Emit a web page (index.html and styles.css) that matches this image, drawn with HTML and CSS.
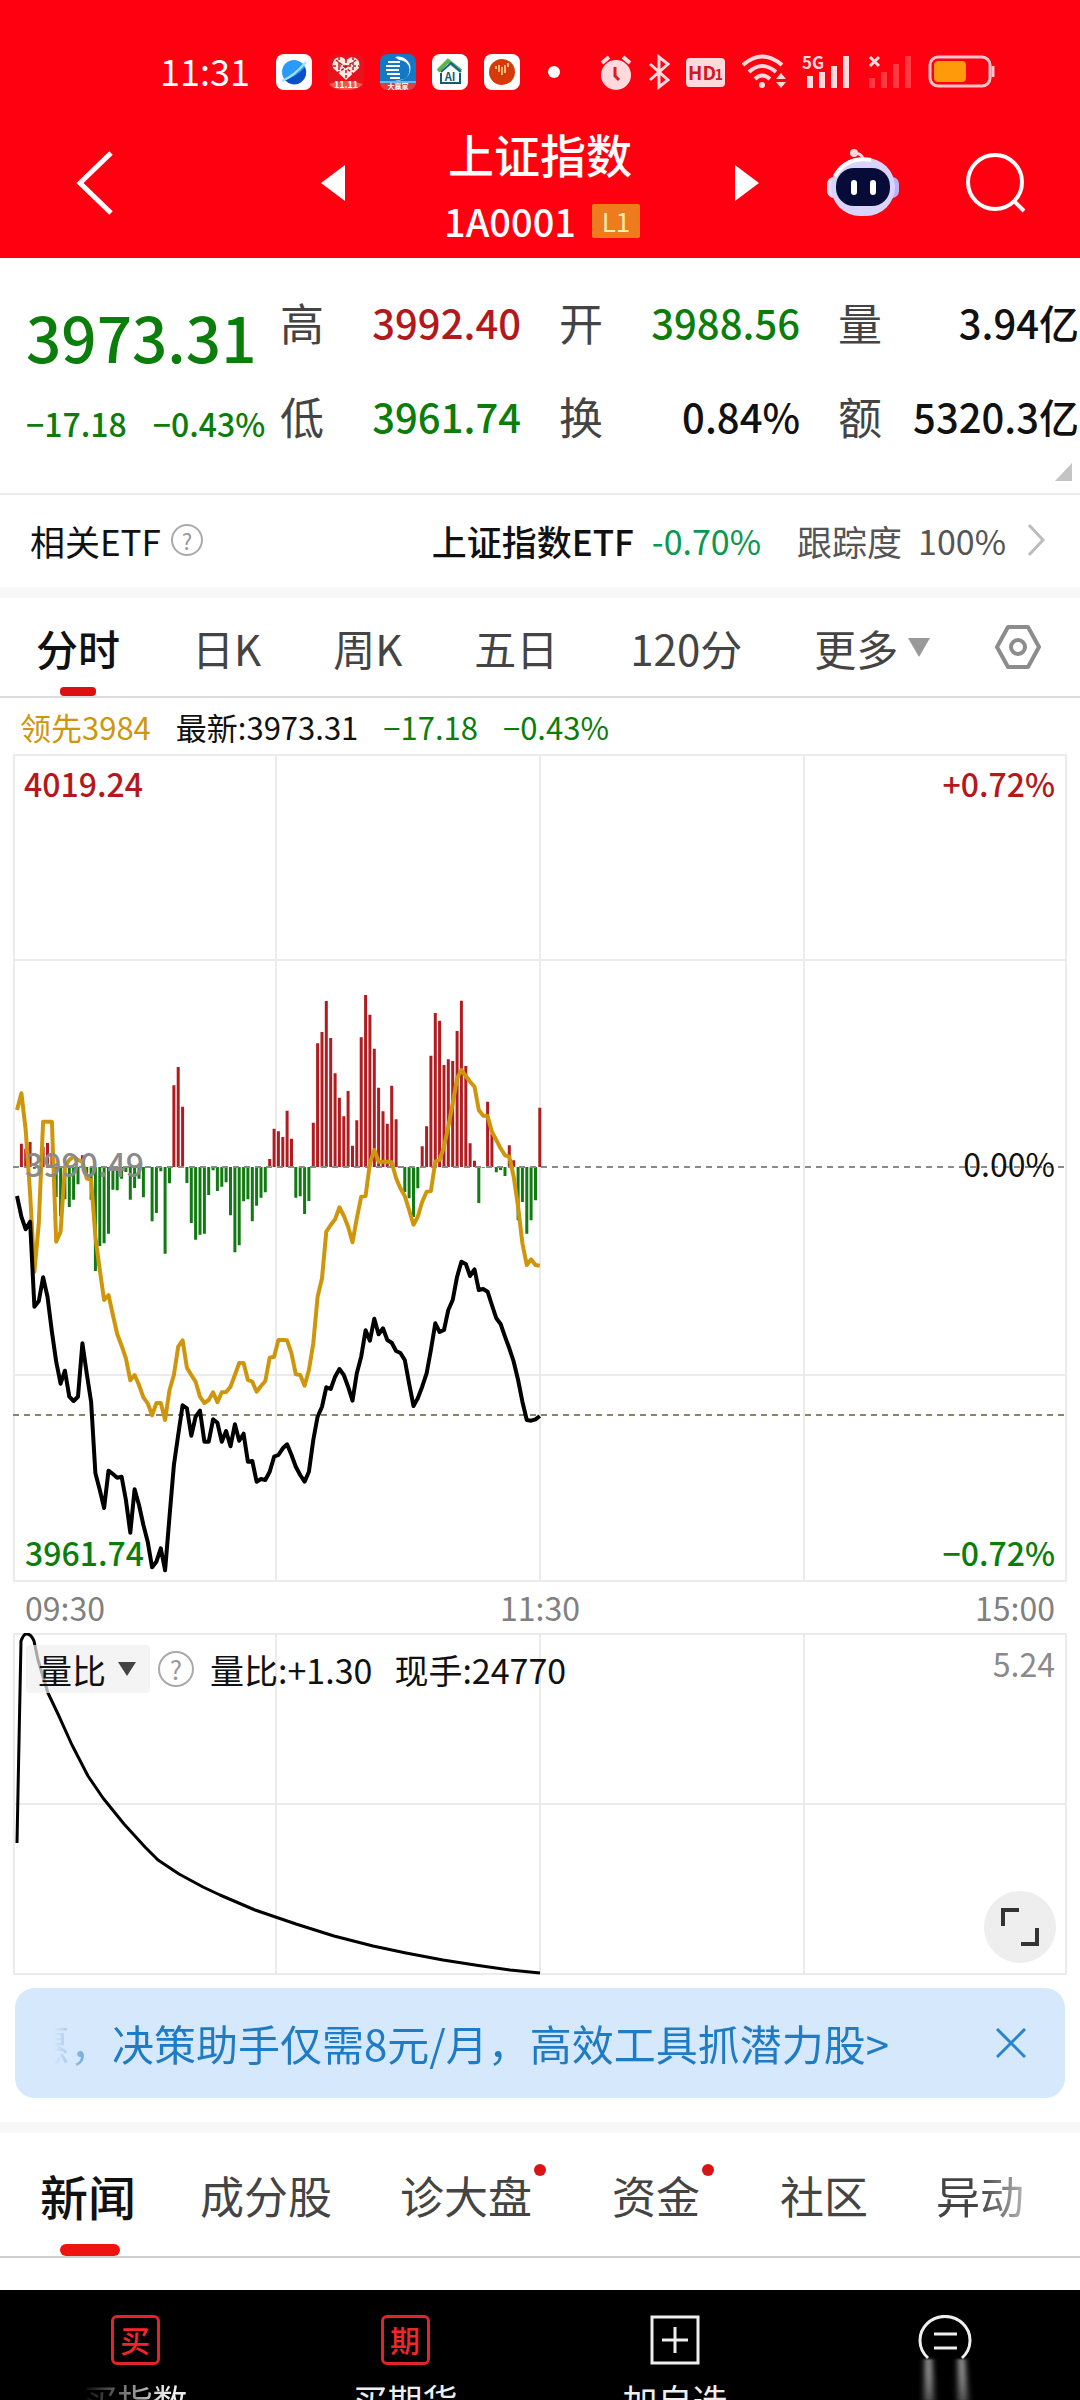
FILE: index.html
```html
<!DOCTYPE html>
<html lang="zh-CN">
<head>
<meta charset="utf-8">
<meta name="viewport" content="width=device-width, initial-scale=1">
<title>上证指数</title>
<link rel="stylesheet" href="styles.css">
</head>
<body>
<header class="top">
  <div class="status">
    <span class="clock">11:31</span>
    <div class="apps">
      <svg width="36" height="36" viewBox="0 0 36 36"><rect width="36" height="36" rx="8" fill="#fff"/><circle cx="18" cy="18" r="12" fill="#2b9bf8"/><path d="M9 26Q22 22 29 13A12 12 0 0 1 9 26Z" fill="#0b50c8"/><path d="M6 27Q18 22 30 8" stroke="#a8e0ff" stroke-width="2" fill="none"/></svg>
      <svg width="36" height="36" viewBox="0 0 36 36"><rect width="36" height="36" rx="8" fill="#e8121c"/><path d="M18 26L5 14Q3 4 12 3Q16 3 18 7Q21 3 25 3Q33 5 31 14Z" fill="#fbe9e4"/><path d="M8 6l20 16M28 6L8 20M18 6v20M5 12h26M11 3v14M25 3v14" stroke="#c81c22" stroke-width="1.5" stroke-dasharray="3 2"/><path d="M1 30Q18 24 35 30Q30 36 18 36T1 30Z" fill="#f4574a"/><text x="18" y="34" text-anchor="middle" class="app-label">11.11</text></svg>
      <svg width="36" height="36" viewBox="0 0 36 36"><rect width="36" height="36" rx="8" fill="#1478c4"/><path d="M15 3a12 12 0 1 1 0 23h5a9 9 0 0 0-1-20Z" fill="#fff"/><path d="M8 8h12M6 12h14M6 16h13M7 20h13M10 24h10" stroke="#fff" stroke-width="2"/><path d="M0 28h36v2q-2 6-8 6H8q-6 0-8-6Z" fill="#d8413d"/><path d="M0 28h36" stroke="#6db4e8" stroke-width="2"/><text x="18" y="35" text-anchor="middle" class="app-label app-label-s">大赢家</text></svg>
      <svg width="36" height="36" viewBox="0 0 36 36"><rect width="36" height="36" rx="8" fill="#fff"/><path d="M6 17L16 7l13 10" stroke="#55b848" stroke-width="4" fill="none"/><path d="M9 18L19 9l10 9" stroke="#1d5c9c" stroke-width="2" fill="none"/><path d="M9 19v10h19V19" stroke="#175a6e" stroke-width="2" fill="none"/><text x="18" y="27" text-anchor="middle" class="app-label app-label-ai">AI</text></svg>
      <svg width="36" height="36" viewBox="0 0 36 36"><rect width="36" height="36" rx="8" fill="#fff"/><circle cx="18" cy="18" r="13" fill="#d63a08"/><path d="M12 12v3M15 11v7M18 13v8M21 11v8M24 9v4" stroke="#ffe0a0" stroke-width="1.5"/></svg>
    </div>
    <span class="more-dot"></span>
    <div class="system">
      <svg width="32" height="36" viewBox="0 0 32 36"><circle cx="16" cy="21" r="15" fill="#ffd9dc"/><path d="M2 9L9 3M30 9L23 3" stroke="#ffd9dc" stroke-width="4"/><path d="M15 13v9l4 4" stroke="#e01a24" stroke-width="3" fill="none"/></svg>
      <svg width="22" height="36" viewBox="0 0 22 36"><path d="M2 10l18 16-9 7V3l9 7L2 26" stroke="#ffd9dc" stroke-width="3" fill="none"/></svg>
      <svg width="40" height="36" viewBox="0 0 40 36"><rect y="4" width="39" height="29" rx="4" fill="#ffd9dc"/><text x="16" y="26" text-anchor="middle" class="hd">HD</text><text x="33" y="26" text-anchor="middle" class="hd hd-s">1</text></svg>
      <svg width="44" height="36" viewBox="0 0 44 36"><path d="M1 11Q20-6 40 11M7 18Q20 6 34 18M13 25Q20 18 28 25" stroke="#ffd9dc" stroke-width="4" fill="none"/><circle cx="20" cy="31" r="3" fill="#ffd9dc"/><path d="M34 25l5-6 5 6zM34 28l5 6 5-6z" fill="#ffd9dc"/></svg>
      <svg width="50" height="36" viewBox="0 0 50 36"><path d="M8 22v12M20 18v16M32 12v22M44 2v32" stroke="#ffd9dc" stroke-width="6"/><text x="0" y="15" class="net">5G</text></svg>
      <svg width="44" height="36" viewBox="0 0 44 36"><path d="M4 24v10M16 18v16M28 10v24M40 2v32" stroke="#ff3a42" stroke-width="6"/><path d="M2 3l9 9M11 3l-9 9" stroke="#ffd9dc" stroke-width="3"/></svg>
      <svg width="68" height="36" viewBox="0 0 68 36"><rect x="2" y="3" width="60" height="29" rx="8" stroke="#ffc4c8" stroke-width="3" fill="none"/><rect x="6" y="7" width="32" height="21" rx="4" fill="#ff9a0a"/><path d="M65 12v11" stroke="#ffc4c8" stroke-width="3"/></svg>
    </div>
  </div>
  <div class="title-bar">
    <div class="title-left">
      <button class="plain" aria-label="返回"><svg width="38" height="64" viewBox="0 0 38 64"><path d="M35 2L4 32l31 30" stroke="#fff" stroke-width="5" fill="none"/></svg></button>
      <button class="plain" aria-label="上一个"><svg width="24" height="36" viewBox="0 0 24 36"><path d="M24 0v36L0 18z" fill="#fff"/></svg></button>
    </div>
    <div class="title">
      <h1>上证指数</h1>
      <p>1A0001 <span class="level">L1</span></p>
    </div>
    <div class="title-right">
      <button class="plain next" aria-label="下一个"><svg width="24" height="36" viewBox="0 0 24 36"><path d="M0 0v36l24-18z" fill="#fff"/></svg></button>
      <button class="plain" aria-label="智能助手"><svg width="72" height="70" viewBox="0 0 72 70"><path d="M36 14Q37 5 26 5" stroke="#ffd5dc" stroke-width="3" fill="none"/><circle cx="27" cy="5" r="4" fill="#ffd5dc"/><rect x="0" y="29" width="16" height="21" rx="7" fill="#f4d9f6"/><rect x="56" y="29" width="16" height="21" rx="7" fill="#b9b2f6"/><rect x="4" y="10" width="64" height="58" rx="29" fill="#d9d4fb"/><path d="M8 28Q20 8 44 12" stroke="#fff" stroke-width="4" fill="none"/><rect x="9" y="20" width="54" height="38" rx="18" fill="#070b38"/><path d="M27 35v9M46 35v9" stroke="#fff" stroke-width="6" stroke-linecap="round"/></svg></button>
      <button class="plain" aria-label="搜索"><svg width="60" height="60" viewBox="0 0 60 60"><circle cx="29" cy="29" r="27" stroke="#fff" stroke-width="4" fill="none"/><path d="M48 48l10 10" stroke="#fff" stroke-width="4"/></svg></button>
    </div>
  </div>
</header>

<main>
  <section class="quote">
    <div class="last">
      <strong>3973.31</strong>
      <p><span>−17.18</span><span>−0.43%</span></p>
    </div>
    <dl class="stats">
      <div><dt>高</dt><dd class="up">3992.40</dd></div>
      <div><dt>开</dt><dd class="down">3988.56</dd></div>
      <div><dt>量</dt><dd>3.94亿</dd></div>
      <div><dt>低</dt><dd class="down">3961.74</dd></div>
      <div><dt>换</dt><dd>0.84%</dd></div>
      <div><dt>额</dt><dd>5320.3亿</dd></div>
    </dl>
    <svg class="expand" width="17" height="18" viewBox="0 0 17 18"><path d="M17 0v18H0z" fill="#c4c4c4"/></svg>
  </section>

  <a class="etf" href="#etf">
    <span>相关ETF</span>
    <span class="help help-s">?</span>
    <span class="etf-name">上证指数ETF</span>
    <span class="etf-change">-0.70%</span>
    <span class="etf-track">跟踪度</span>
    <span class="etf-pct">100%</span>
    <svg width="20" height="34" viewBox="0 0 20 34"><path d="M3 2l14 15L3 32" stroke="#bcbcbc" stroke-width="3" fill="none"/></svg>
  </a>

  <nav class="periods">
    <button class="period active">分时</button>
    <button class="period">日K</button>
    <button class="period">周K</button>
    <button class="period">五日</button>
    <button class="period">120分</button>
    <button class="period">更多<svg width="22" height="19" viewBox="0 0 22 19"><path d="M0 0h22L11 19z" fill="#999"/></svg></button>
    <button class="period settings" aria-label="设置"><svg width="48" height="46" viewBox="0 0 48 46"><path d="M14 3h20l11 20-11 20H14L3 23z" stroke="#8c8c8c" stroke-width="4" stroke-linejoin="round" fill="none"/><circle cx="24" cy="23" r="7" stroke="#8c8c8c" stroke-width="4" fill="none"/></svg></button>
  </nav>

  <p class="summary"><span class="lead">领先3984</span><span>最新:3973.31</span><span class="down">−17.18</span><span class="down">−0.43%</span></p>

  <section class="chart">
    <svg class="plot" viewBox="0 0 1054 828">
      <path class="grid" d="M1 1H1053V827H1ZM263 0V828M527 0V828M791 0V828M0 206H1054M0 621H1054"/>
      <path id="bars-up" class="bars-up"/>
      <path id="bars-down" class="bars-down"/>
      <path class="dash" d="M0 413H1054"/>
      <path class="dash dash-last" d="M0 661H1054"/>
      <path id="lead-line" class="lead-line"/>
      <path id="price-line" class="price-line"/>
    </svg>
    <span class="tag tag-mid-left">3990.49</span>
    <span class="tag tag-top-left up">4019.24</span>
    <span class="tag tag-top-right up">+0.72%</span>
    <span class="tag tag-mid-right">0.00%</span>
    <span class="tag tag-bottom-left down">3961.74</span>
    <span class="tag tag-bottom-right down">−0.72%</span>
  </section>
  <div class="times"><span>09:30</span><span>11:30</span><span>15:00</span></div>

  <section class="chart ratio">
    <svg class="plot" viewBox="0 0 1054 342">
      <path class="grid" d="M1 1H1053V341H1ZM263 0V342M527 0V342M791 0V342M0 171H1054"/>
      <path class="ratio-line" d="M4 210L8 8Q11 0 14 1Q18 1 21 8L25 27L35 60L45 81L59 112L75 143L90 165L111 191L132 214L145 227L166 241L190 254L207 262L242 277L283 291L321 303L360 313L393 320L430 327L462 332L497 337L527 340"/>
    </svg>
    <div class="ratio-head">
      <button class="pick">量比<svg width="18" height="14" viewBox="0 0 18 14"><path d="M0 0h18L9 14z" fill="#444"/></svg></button>
      <span class="help">?</span>
      <span>量比:+1.30</span>
      <span class="hand">现手:24770</span>
      <span class="ratio-max">5.24</span>
    </div>
    <button class="full" aria-label="全屏"><svg width="38" height="38" viewBox="0 0 38 38"><path d="M2 18V2h16M36 20v16H20" stroke="#333" stroke-width="4" fill="none"/></svg></button>
  </section>

  <aside class="banner">
    <a href="#promo">惠，决策助手仅需8元/月，高效工具抓潜力股&gt;</a>
    <button class="plain" aria-label="关闭"><svg width="30" height="30" viewBox="0 0 30 30"><path d="M1 1l28 28M29 1L1 29" stroke="#2a84cc" stroke-width="3"/></svg></button>
  </aside>

  <nav class="sections">
    <button class="section active">新闻</button>
    <button class="section">成分股</button>
    <button class="section new">诊大盘</button>
    <button class="section new">资金</button>
    <button class="section">社区</button>
    <button class="section fading">异动</button>
  </nav>
</main>

<footer class="bottom">
  <button class="action faint"><span class="seal">买</span><span class="action-label">买指数</span></button>
  <button class="action"><span class="seal">期</span><span class="action-label">买期货</span></button>
  <button class="action"><svg width="50" height="50" viewBox="0 0 50 50"><path d="M2 2h46v46H2zM25 12v26M12 25h26" stroke="#eee" stroke-width="3" fill="none"/></svg><span class="action-label">加自选</span></button>
  <button class="action" aria-label="功能"><svg width="100" height="86" viewBox="0 0 100 86"><defs><linearGradient id="beam" x1="0" y1="0" x2="0" y2="1"><stop offset="0" stop-color="#ddd"/><stop offset="1" stop-color="#555"/></linearGradient><filter id="soft" x="-1" width="3"><feGaussianBlur stdDeviation="3 1"/></filter></defs><path d="M33 43A25 24 0 1 1 67 43M39 19h23M39 33h23" stroke="#eee" stroke-width="3" fill="none"/><path d="M31 44h5l3 42H29zM64 44h5l4 42H63z" fill="url(#beam)" filter="url(#soft)"/></svg></button>
</footer>
<script src="chart.js"></script>
</body>
</html>
```
FILE: styles.css
```css
* { box-sizing: border-box; margin: 0; padding: 0; }
body {
  font-family: "Noto Sans CJK SC", sans-serif;
  color: #111;
  background: #fff;
  min-height: 100vh;
  display: flex;
  flex-direction: column;
  overflow-x: hidden;
}
button { font: inherit; color: inherit; background: none; border: 0; }
a { color: inherit; text-decoration: none; }
svg { display: block; flex: none; }
.up { color: #b3191b; }
.down { color: #0a7d0a; }

/* header */
.top { background: #ff0010; color: #fff; height: 258px; }
.status { display: flex; align-items: center; height: 110px; padding: 34px 84px 0 160px; }
.clock { font-size: 36px; line-height: 36px; width: 116px; padding-bottom: 4px; }
.apps { display: flex; gap: 16px; }
.app-label { font-size: 9px; font-weight: 700; fill: #fff; }
.app-label-s { font-size: 7px; }
.app-label-ai { font-size: 11px; fill: #175a6e; }
.more-dot { width: 12px; height: 12px; margin-left: 28px; border-radius: 50%; background: #fff; }
.system { display: flex; gap: 16px; margin-left: auto; }
.hd { font-size: 19px; font-weight: 700; fill: #d01822; }
.hd-s { font-size: 14px; }
.net { font-size: 17px; font-weight: 700; fill: #ffd9dc; }
.title-bar { display: grid; grid-template-columns: 1fr 390px 1fr; height: 148px; }
.title-left, .title-right { display: flex; align-items: center; justify-content: space-between; padding-bottom: 2px; }
.title-left { padding-left: 76px; }
.title-right { padding-right: 54px; }
.title { text-align: center; padding-top: 13px; }
.title h1 { font-size: 46px; line-height: 60px; font-weight: 500; }
.title p { display: flex; justify-content: center; align-items: center; gap: 16px; padding: 20px 0 0 4px; font-size: 38px; line-height: 36px; font-weight: 500; }
.level { width: 48px; height: 34px; font-size: 26px; line-height: 34px; color: #fdeeb0; background: #ee7b1e; border-radius: 2px; font-weight: 400; }

/* quote */
.quote { display: grid; grid-template-columns: 280px 1fr; height: 237px; padding-top: 24px; border-bottom: 2px solid #ececec; position: relative; }
.last { padding-left: 26px; color: #0a7d0a; }
.last strong { display: block; font-size: 62px; line-height: 108px; font-weight: 500; }
.last p { display: flex; gap: 26px; font-size: 32px; line-height: 66px; font-weight: 500; white-space: nowrap; }
.stats { display: grid; grid-template-columns: 241px 241px 1fr; column-gap: 38px; grid-auto-rows: 94px; padding-right: 1px; margin-top: -7px; }
.stats div { display: flex; justify-content: space-between; align-items: center; white-space: nowrap; }
.stats dt { font-size: 44px; color: #444; }
.stats dd { font-size: 40px; font-weight: 500; }
.expand { position: absolute; right: 8px; bottom: 12px; }

/* related fund */
.etf { display: flex; align-items: center; height: 103px; padding: 0 34px 2px 30px; font-size: 35px; border-bottom: 11px solid #f8f8f8; white-space: nowrap; }
.help { width: 36px; height: 36px; border: 2px solid #aaa; border-radius: 50%; color: #999; font-size: 26px; line-height: 32px; text-align: center; }
.help-s { width: 32px; height: 32px; font-size: 22px; line-height: 28px; margin-left: 10px; }
.etf-name { margin-left: auto; font-weight: 500; }
.etf-change { margin-left: 18px; font-size: 34px; color: #089850; }
.etf-track { margin-left: 36px; color: #555; }
.etf-pct { margin: 0 20px 0 16px; font-size: 34px; color: #555; }

/* period tabs */
.periods { display: flex; align-items: stretch; gap: 72px; height: 100px; padding: 0 36px; border-bottom: 2px solid #dcdcdc; }
.period { display: flex; align-items: center; gap: 10px; position: relative; font-size: 42px; color: #444; white-space: nowrap; }
.period.active { font-weight: 500; color: #111; }
.period.active::after { content: ""; position: absolute; bottom: 0; left: 50%; width: 36px; height: 9px; margin-left: -18px; border-radius: 4px; background: #dc1010; }
.settings { margin-left: -8px; }
.summary { display: flex; gap: 25px; padding: 0 20px; height: 56px; font-size: 31px; line-height: 58px; white-space: nowrap; }
.lead { color: #cf960c; }

/* charts */
.chart { position: relative; margin: 0 13px; }
.plot { width: 100%; height: auto; }
.grid { fill: none; stroke: #ebebeb; stroke-width: 2; }
.dash { stroke: #8a8a8a; stroke-width: 2; stroke-dasharray: 6 5; }
.dash-last { stroke: #8d8460; }
.bars-up { stroke: #b01c20; stroke-width: 3; }
.bars-down { stroke: #127a12; stroke-width: 3; }
.lead-line, .price-line, .ratio-line { fill: none; stroke: #cf960c; stroke-width: 4; stroke-linejoin: round; }
.price-line { stroke: #000; }
.ratio-line { stroke: #000; stroke-width: 3; }
.tag { position: absolute; font-size: 32px; line-height: 40px; margin-top: -20px; font-weight: 500; }
.tag-top-left { left: 11px; top: 29px; }
.tag-top-right { right: 12px; top: 29px; }
.tag-mid-left, .tag-mid-right { top: 50%; margin-top: -25px; font-weight: 400; }
.tag-mid-left { left: 12px; color: #8a8a8a; font-weight: 500; }
.tag-mid-right { right: 12px; }
.tag-bottom-left { left: 12px; bottom: 10px; }
.tag-bottom-right { right: 12px; bottom: 10px; }
.times { display: flex; justify-content: space-between; padding: 0 25px; font-size: 32px; line-height: 51px; color: #808080; }
.ratio-head { position: absolute; left: 13px; right: 12px; top: 12px; display: flex; align-items: center; height: 48px; font-size: 34px; white-space: nowrap; }
.pick { display: flex; align-items: center; gap: 12px; height: 48px; padding: 0 14px 0 12px; margin-right: 8px; background: rgba(240, 240, 240, 0.7); border-radius: 4px; }
.ratio-head .help { margin-right: 16px; }
.hand { margin-left: 22px; }
.ratio-max { margin-left: auto; padding-bottom: 12px; font-size: 32px; color: #8a8a8a; }
.full { position: absolute; right: 11px; bottom: 12px; width: 72px; height: 72px; border-radius: 50%; background: #eee; display: grid; place-items: center; }

/* promo banner */
.banner { display: flex; align-items: center; justify-content: space-between; height: 110px; margin: 13px 15px 24px; padding: 0 39px 0 13px; border-radius: 20px; background: #d6e9fc; color: #1f7cc4; }
.banner a { font-size: 42px; line-height: 60px; white-space: nowrap; -webkit-mask-image: linear-gradient(90deg, transparent 26px, #000 80px); mask-image: linear-gradient(90deg, transparent 26px, #000 80px); }

/* content tabs */
.sections { display: flex; gap: 68px; height: 136px; padding: 0 40px; border-top: 11px solid #f8f8f8; border-bottom: 2px solid #cfcfcf; overflow: hidden; }
.section { position: relative; font-size: 44px; color: #444; white-space: nowrap; }
.section.active { font-size: 48px; font-weight: 500; color: #111; margin-right: -4px; }
.section.active::after { content: ""; position: absolute; left: 50%; bottom: 0; width: 60px; height: 12px; margin-left: -28px; border-radius: 6px; background: #f01410; }
.section.new { padding-right: 12px; }
.section.new::after { content: ""; position: absolute; right: -2px; top: 31px; width: 12px; height: 12px; border-radius: 50%; background: #d81414; }
.fading { -webkit-mask-image: linear-gradient(90deg, #000 50%, rgba(0, 0, 0, 0.4)); mask-image: linear-gradient(90deg, #000 50%, rgba(0, 0, 0, 0.4)); }

/* trading bar */
.bottom { display: grid; grid-template-columns: repeat(4, 1fr); height: 110px; margin-top: auto; background: #000; color: #eee; overflow: hidden; }
.action { display: flex; flex-direction: column; align-items: center; padding-top: 25px; gap: 13px; }
.seal { width: 49px; height: 50px; border: 3px solid #e0242a; border-radius: 6px; font-size: 30px; line-height: 42px; color: #f0262c; font-weight: 500; flex: none; }
.action-label { font-size: 35px; line-height: 44px; }
.faint .action-label { -webkit-mask-image: linear-gradient(90deg, transparent, #000 80%); mask-image: linear-gradient(90deg, transparent, #000 80%); }
```
FILE: chart.js
```js
// One entry per trading minute, 09:30 to 11:30; three units make one plot pixel.
const STEP = 4.357;
const START = 4;
const ZERO = 413;

const flow = [
  0, 70, 55, 75, -5, 0, 60, 72, 40, -90, -148, -97, -120, -98, -52, 35, -20, -98, -312, -237,
  -229, -200, -68, -70, -35, -15, -98, -63, -35, -91, 3, -163, -138, -13, -260, -49, 245, 300, 181, -48,
  -168, -218, -203, -200, -84, -10, -72, -59, -46, -145, -256, -235, -103, -97, -163, -116, -92, -76, 24, 115,
  107, 90, 169, 85, -92, -88, -141, -102, 133, 371, 405, 498, 387, 281, 208, 152, 228, 64, 140, 389,
  516, 457, 355, 238, 167, 130, 244, 143, 0, -75, -94, -150, -64, 62, 122, 334, 462, 439, 306, 323,
  318, 408, 499, 303, 71, 19, -108, -2, 196, 100, -16, -9, -27, 65, 20, -160, -105, -200, -160, -100, 178
];

const lead = [
  -270, -320, -210, -20, 215, 70, -235, -235, -235, 125, 95, -100, -120, -130, -120, -115, -65, -60, 110, 210,
  300, 285, 345, 402, 437, 475, 541, 525, 555, 592, 610, 646, 609, 609, 660, 570, 525, 440, 421, 503,
  525, 545, 590, 609, 600, 577, 607, 577, 576, 560, 525, 489, 489, 540, 545, 575, 558, 543, 473, 470,
  420, 420, 421, 460, 523, 525, 557, 510, 430, 290, 235, 95, 75, 58, 22, 47, 80, 127, 55, -10,
  -12, -110, -150, -115, -115, -115, -113, -65, -35, -12, 30, 74, 50, 5, -25, -27, -115, -120, -160, -220,
  -290, -365, -390, -372, -355, -340, -270, -253, -252, -205, -180, -155, -134, -130, -70, 20, 130, 195, 178, 195, 197
];

const price = [
  -12, 50, 88, 65, 320, 303, 232, 290, 395, 485, 551, 512, 590, 603, 590, 430, 520, 605, 820, 870,
  924, 812, 822, 833, 830, 900, 998, 868, 915, 975, 1025, 1102, 1085, 1045, 1111, 950, 795, 705, 616, 625,
  707, 650, 632, 725, 725, 658, 668, 725, 693, 739, 673, 722, 701, 785, 783, 845, 837, 840, 815, 770,
  765, 745, 733, 765, 800, 825, 845, 815, 720, 650, 620, 562, 567, 530, 507, 525, 560, 602, 520, 470,
  391, 422, 356, 403, 385, 420, 428, 453, 459, 480, 550, 618, 595, 560, 520, 450, 370, 396, 390, 330,
  300, 230, 185, 192, 228, 208, 270, 267, 275, 315, 355, 372, 410, 445, 485, 540, 605, 660, 662, 658, 648
];

const x = (minute) => (START + minute * STEP).toFixed(1);

function bars(keep) {
  return flow
    .map((v, i) => (keep(v) ? `M${x(i)} ${ZERO}V${(ZERO - v / 3).toFixed(1)}` : ""))
    .join("");
}

function line(values) {
  return "M" + values.map((v, i) => `${x(i)} ${(446 + v / 3).toFixed(1)}`).join("L");
}

const draw = (id, d) => document.getElementById(id).setAttribute("d", d);
draw("bars-up", bars((v) => v > 0));
draw("bars-down", bars((v) => v < 0));
draw("lead-line", line(lead));
draw("price-line", line(price));
```
